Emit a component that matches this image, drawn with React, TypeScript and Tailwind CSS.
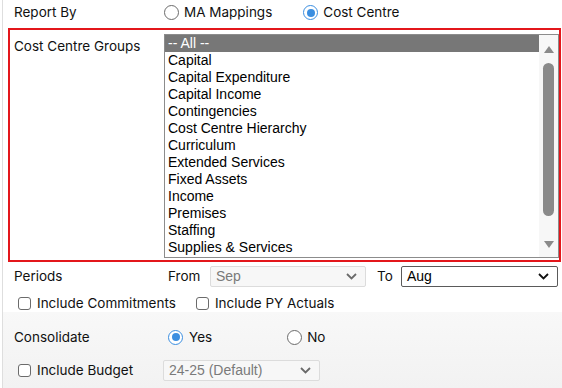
import React from 'react';

const groups = [
  'Capital',
  'Capital Expenditure',
  'Capital Income',
  'Contingencies',
  'Cost Centre Hierarchy',
  'Curriculum',
  'Extended Services',
  'Fixed Assets',
  'Income',
  'Premises',
  'Staffing',
  'Supplies & Services',
];

const Radio = ({ checked }: { checked?: boolean }) =>
  checked ? (
    <span className="inline-flex h-[15px] w-[15px] items-center justify-center rounded-full border-[1.5px] border-[#3b8ee0] bg-white">
      <span className="h-[8px] w-[8px] rounded-full bg-[#3b8ee0]" />
    </span>
  ) : (
    <span className="inline-block h-[15px] w-[15px] rounded-full border border-[#6b6b6b] bg-white" />
  );

const Checkbox = () => (
  <span className="inline-block h-[13px] w-[13px] rounded-[3px] border border-[#6b6b6b] bg-white" />
);

const Chevron = ({ color }: { color: string }) => (
  <svg width="11" height="7" viewBox="0 0 11 7" fill="none">
    <path d="M1 1l4.5 4.5L10 1" stroke={color} strokeWidth="1.8" />
  </svg>
);

const FakeSelect = ({ value, disabled, width }: { value: string; disabled?: boolean; width: string }) => (
  <div
    className={`flex h-[21px] items-center justify-between rounded-[2px] pl-[5px] pr-[8px] font-['Liberation_Sans',Arial,sans-serif] text-[14px] ${width} ${
      disabled ? 'border border-[#dcdcdc] bg-[#f7f7f7] text-[#7a7a7a]' : 'border border-[#5a5a5a] bg-white text-black'
    }`}
  >
    <span>{value}</span>
    <Chevron color={disabled ? '#6a6a6a' : '#111'} />
  </div>
);

export default function App() {
  return (
    <div className="h-[388px] w-[562px] overflow-hidden bg-white font-['Inter','Noto_Sans',sans-serif] text-[13.5px] text-[#111]">
      <div className="ml-[2px] flex h-full flex-col border-l border-[#dedede]">
        <div className="flex h-[25px] items-center">
          <span className="w-[161px] pl-[11px]">Report By</span>
          <label className="flex items-center gap-[5px]">
            <Radio />
            MA Mappings
          </label>
          <label className="ml-[31px] flex items-center gap-[5px]">
            <Radio checked />
            Cost Centre
          </label>
        </div>

        <div className="ml-[5px] mr-[1px] mt-[3px] flex h-[234px] border-2 border-[#e3161b] pt-[4px]">
          <span className="w-[154px] shrink-0 pl-[4px] pt-[2px]">Cost Centre Groups</span>
          <div className="flex h-[224px] flex-1 border border-[#8c8c8c] font-['Liberation_Sans',Arial,sans-serif] text-[14px] leading-[17px] text-black">
            <div className="flex-1 overflow-hidden">
              <div className="bg-[#777777] pl-[3px] text-white">-- All --</div>
              {groups.map((g) => (
                <div key={g} className="pl-[3px]">
                  {g}
                </div>
              ))}
            </div>
            <div className="flex w-[19px] flex-col items-center bg-[#f7f7f7] pt-[10px]">
              <svg width="12" height="9" viewBox="0 0 12 9">
                <path d="M6 1L11 8H1z" fill="#8a8a8a" />
              </svg>
              <div className="mt-[9px] h-[153px] w-[11px] rounded-full bg-[#8a8a8a]" />
              <svg className="mt-[24px]" width="12" height="9" viewBox="0 0 12 9">
                <path d="M1 1h10L6 8z" fill="#8a8a8a" />
              </svg>
            </div>
          </div>
        </div>

        <div className="mt-[3px] flex h-[23px] items-center">
          <span className="w-[165px] pl-[11px]">Periods</span>
          <span className="w-[42px]">From</span>
          <FakeSelect value="Sep" disabled width="w-[156px]" />
          <span className="ml-[11px] w-[24px]">To</span>
          <FakeSelect value="Aug" width="w-[157px]" />
        </div>

        <div className="mt-[6px] flex h-[18px] items-center pl-[15px]">
          <label className="flex items-center gap-[6px]">
            <Checkbox />
            Include Commitments
          </label>
          <label className="ml-[20px] flex items-center gap-[6px]">
            <Checkbox />
            Include PY Actuals
          </label>
        </div>

        <div className="flex flex-1 flex-col bg-gradient-to-b from-[#f8f8f8] to-[#f2f2f2] pt-[13px]">
          <div className="flex h-[24px] items-center">
            <span className="w-[165px] pl-[11px]">Consolidate</span>
            <label className="flex items-center gap-[6px]">
              <Radio checked />
              Yes
            </label>
            <label className="ml-[75px] flex items-center gap-[5px]">
              <Radio />
              No
            </label>
          </div>
          <div className="mt-[10px] flex h-[22px] items-center">
            <label className="flex w-[160px] items-center gap-[6px] pl-[15px]">
              <Checkbox />
              Include Budget
            </label>
            <FakeSelect value="24-25 (Default)" disabled width="w-[157px]" />
          </div>
        </div>
      </div>
    </div>
  );
}
